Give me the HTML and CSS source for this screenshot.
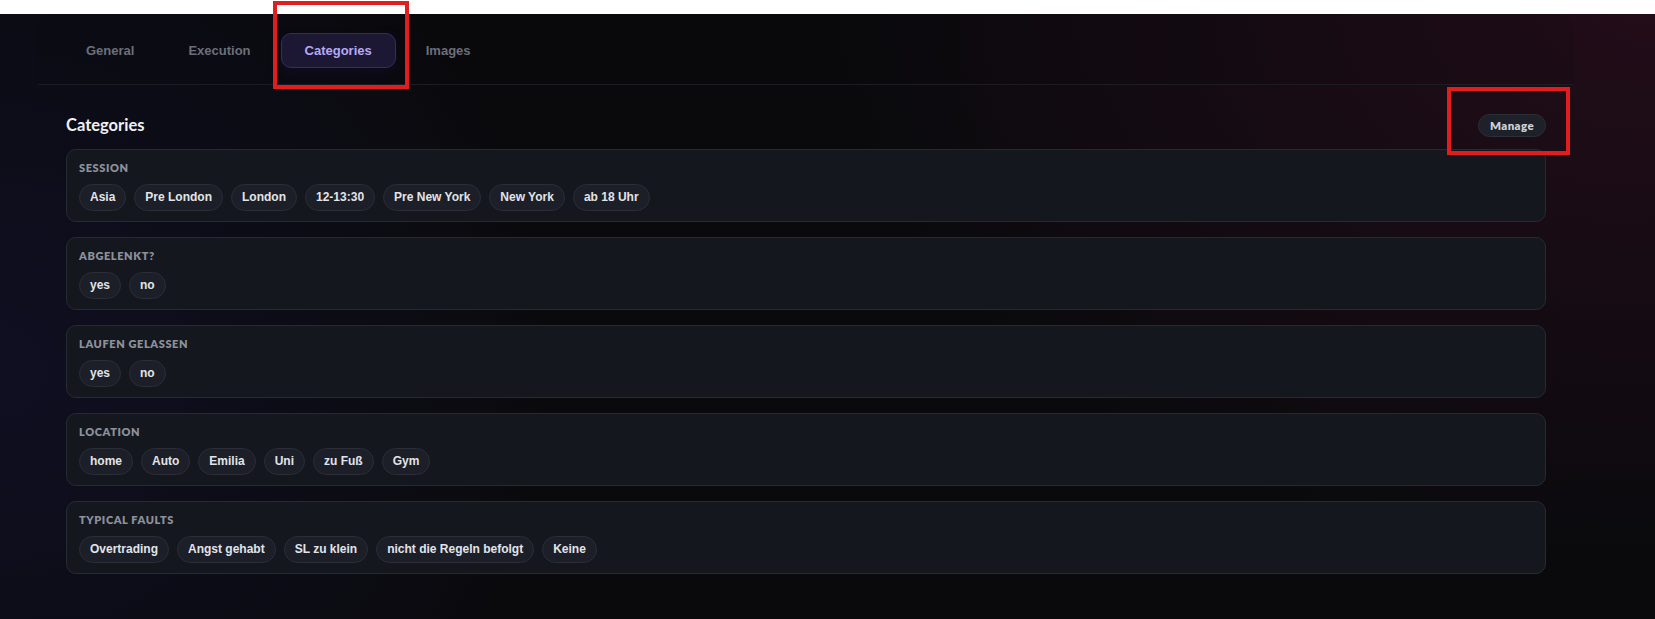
FILE: index.html
```html
<!DOCTYPE html>
<html lang="de">
<head>
<meta charset="utf-8">
<title>Settings – Categories</title>
<link rel="stylesheet" href="styles.css">
</head>
<body>
<div class="topstrip"></div>
<div class="main">
  <nav class="tabs">
    <button class="tab">General</button>
    <button class="tab">Execution</button>
    <button class="tab active">Categories</button>
    <button class="tab">Images</button>
  </nav>
  <section class="content">
    <div class="section-head">
      <h2 class="section-title">Categories</h2>
      <button class="manage">Manage</button>
    </div>
    <div class="cards">
      <div class="card">
        <div class="card-label">SESSION</div>
        <div class="chips">
          <span class="chip">Asia</span>
          <span class="chip">Pre London</span>
          <span class="chip">London</span>
          <span class="chip">12-13:30</span>
          <span class="chip">Pre New York</span>
          <span class="chip">New York</span>
          <span class="chip">ab 18 Uhr</span>
        </div>
      </div>
      <div class="card">
        <div class="card-label">ABGELENKT?</div>
        <div class="chips">
          <span class="chip">yes</span>
          <span class="chip">no</span>
        </div>
      </div>
      <div class="card">
        <div class="card-label">LAUFEN GELASSEN</div>
        <div class="chips">
          <span class="chip">yes</span>
          <span class="chip">no</span>
        </div>
      </div>
      <div class="card">
        <div class="card-label">LOCATION</div>
        <div class="chips">
          <span class="chip">home</span>
          <span class="chip">Auto</span>
          <span class="chip">Emilia</span>
          <span class="chip">Uni</span>
          <span class="chip">zu Fuß</span>
          <span class="chip">Gym</span>
        </div>
      </div>
      <div class="card">
        <div class="card-label">TYPICAL FAULTS</div>
        <div class="chips">
          <span class="chip">Overtrading</span>
          <span class="chip">Angst gehabt</span>
          <span class="chip">SL zu klein</span>
          <span class="chip">nicht die Regeln befolgt</span>
          <span class="chip">Keine</span>
        </div>
      </div>
    </div>
  </section>
</div>
<div class="mark mark-tab"></div>
<div class="mark mark-manage"></div>
</body>
</html>
```
FILE: styles.css
```css
html, body {
  margin: 0;
  padding: 0;
}
body {
  position: relative;
  min-height: 619px;
  overflow: hidden;
  font-family: "Liberation Sans", Arial, sans-serif;
  background-color: #0a0a0d;
  background-image:
    radial-gradient(ellipse 820px 560px at 100% 0%, rgba(36, 13, 26, 0.95), rgba(36, 13, 26, 0) 100%),
    radial-gradient(ellipse 560px 560px at 0% 60%, rgba(16, 16, 38, 0.85), rgba(16, 16, 38, 0) 100%);
}
.topstrip {
  height: 14px;
  background: #ffffff;
}
.main {
  margin-left: 38px;
  width: 1536px;
}
.tabs {
  display: flex;
  gap: 6px;
  padding: 19px 24px 16px;
  border-bottom: 1px solid #1c1c24;
  background: rgba(10, 10, 14, 0.1);
  border-radius: 16px 16px 0 0;
}
.tab {
  font-family: "Liberation Sans", Arial, sans-serif;
  font-weight: 700;
  font-size: 13px;
  line-height: 15px;
  padding: 9px 23px;
  border: 1px solid transparent;
  border-radius: 10px;
  background: transparent;
  color: #6c6f7a;
  cursor: pointer;
}
.tab.active {
  background: #1c1834;
  border-color: #342d5e;
  color: #b7a8f3;
  box-shadow: 0 6px 14px rgba(40, 30, 90, 0.18);
}
.content {
  padding: 28px 28px;
}
.section-head {
  display: flex;
  align-items: center;
  justify-content: space-between;
  height: 24px;
  margin-bottom: 12px;
}
.section-title {
  margin: 0;
  font-family: Lato, "Noto Sans", sans-serif;
  font-weight: 700;
  font-size: 16.5px;
  line-height: 24px;
  color: #f0f1f4;
}
.manage {
  font-family: Lato, "Noto Sans", sans-serif;
  font-weight: 800;
  font-size: 11.5px;
  letter-spacing: 0.4px;
  line-height: 13px;
  height: 23px;
  padding: 4px 11px;
  border-radius: 12px;
  border: 1px solid #2b2f38;
  background: #1e2129;
  color: #cdd0d7;
}
.cards {
  display: flex;
  flex-direction: column;
  gap: 15px;
}
.card {
  background: #14171e;
  border: 1px solid #262a32;
  border-radius: 10px;
  padding: 10px 12px;
}
.card-label {
  font-family: Lato, "Noto Sans", sans-serif;
  font-weight: 800;
  font-size: 11px;
  line-height: 16px;
  letter-spacing: 0.6px;
  color: #8d919b;
  margin-bottom: 8px;
}
.chips {
  display: flex;
  flex-wrap: wrap;
  gap: 8px;
}
.chip {
  font-family: "Liberation Sans", Arial, sans-serif;
  font-weight: 700;
  font-size: 12px;
  line-height: 15px;
  padding: 5px 10px;
  border: 1px solid #2b2e37;
  border-radius: 14px;
  background: #1c1f27;
  color: #e2e4e9;
}
.mark {
  position: absolute;
  border: 4px solid #e21d1d;
  box-sizing: border-box;
}
.mark-tab {
  left: 273px;
  top: 1px;
  width: 136px;
  height: 88px;
}
.mark-manage {
  left: 1447px;
  top: 87px;
  width: 123px;
  height: 68px;
}
```
